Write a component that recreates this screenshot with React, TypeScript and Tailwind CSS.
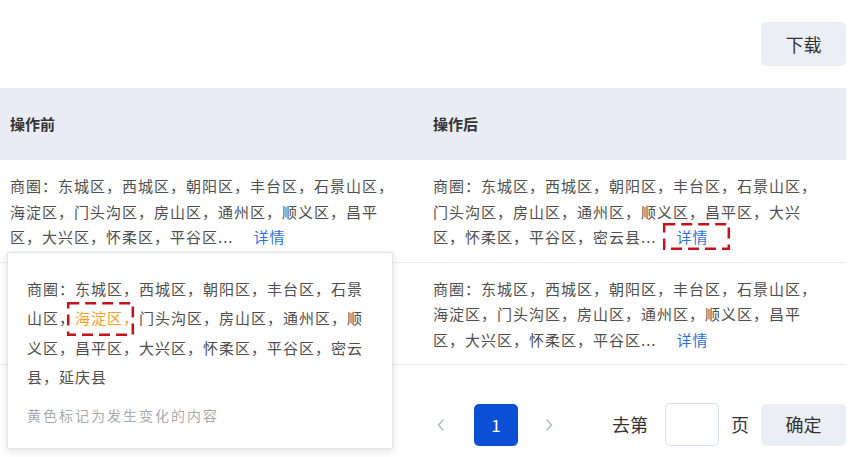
import React from 'react'

const FONT = { fontFamily: '"Noto Sans CJK SC", "Noto Sans", sans-serif' }

const ROWS = [
  {
    before: '商圈：东城区，西城区，朝阳区，丰台区，石景山区，海淀区，门头沟区，房山区，通州区，顺义区，昌平区，大兴区，怀柔区，平谷区...',
    after: '商圈：东城区，西城区，朝阳区，丰台区，石景山区，门头沟区，房山区，通州区，顺义区，昌平区，大兴区，怀柔区，平谷区，密云县...',
    markAfter: true,
  },
  {
    before: '商圈：东城区，西城区，朝阳区，丰台区，石景山区，海淀区，门头沟区，房山区，通州区，顺义区，昌平区，大兴区，怀柔区，平谷区...',
    after: '商圈：东城区，西城区，朝阳区，丰台区，石景山区，海淀区，门头沟区，房山区，通州区，顺义区，昌平区，大兴区，怀柔区，平谷区...',
    markAfter: false,
  },
]

// red dashed annotation frame drawn over the text
function Frame({ className }: { className: string }) {
  return (
    <svg className={'pointer-events-none absolute overflow-visible ' + className}>
      <rect x="1.2" y="1.2" width="calc(100% - 2.4px)" height="calc(100% - 2.4px)" fill="none" stroke="#c5131d" strokeWidth="2.5" strokeDasharray="11 6" />
    </svg>
  )
}

function Cell({ text, mark }: { text: string; mark?: boolean }) {
  return (
    <div className="w-[423px] pl-[10px] pr-[20px] pt-[13px] pb-[12px]">
      <p className="text-[15px] leading-[25.5px] tracking-[1px] text-[#4f4f4f]">
        {text}
        <span className="relative ml-[20px] text-[#2f6fe0]">
          详情
          {mark && <Frame className="-left-[14px] -top-[3px] h-[27px] w-[67px]" />}
        </span>
      </p>
    </div>
  )
}

function Chevron({ dir }: { dir: 'left' | 'right' }) {
  return (
    <svg width="10" height="16" viewBox="0 0 10 16" fill="none">
      <polyline
        points={dir === 'left' ? '7,3 2.5,8 7,13' : '3,3 7.5,8 3,13'}
        stroke="#b4bac6"
        strokeWidth="1.6"
        strokeLinecap="round"
        strokeLinejoin="round"
      />
    </svg>
  )
}

export default function App() {
  return (
    <div className="relative h-[457px] w-[856px] overflow-hidden bg-white" style={FONT}>
      <div className="flex justify-end pt-[22px] pr-[10px]">
        <button className="h-[44px] w-[85px] rounded-[5px] bg-[#eceef5] text-[18px] text-[#333]">下载</button>
      </div>

      <div className="mt-[22px] w-[846px]">
        <div className="flex h-[72px] items-center bg-[#e9ecf4] text-[15px] font-semibold text-[#333]">
          <div className="w-[423px] pl-[10px]">操作前</div>
          <div className="w-[423px] pl-[10px]">操作后</div>
        </div>
        {ROWS.map((r, i) => (
          <div key={i} className="flex border-b border-[#e8ebf2]">
            <Cell text={r.before} />
            <Cell text={r.after} mark={r.markAfter} />
          </div>
        ))}
      </div>

      <div className="mt-[38px] flex items-center justify-end pr-[10px] text-[18px] text-[#333]">
        <Chevron dir="left" />
        <div className="ml-[28px] flex h-[42px] w-[44px] items-center justify-center rounded-[5px] bg-[#0b4fd4] text-[17px] text-white">1</div>
        <div className="ml-[26px]"><Chevron dir="right" /></div>
        <span className="ml-[58px]">去第</span>
        <div className="ml-[17px] h-[43px] w-[54px] rounded-[5px] border border-[#d9dfeb] bg-white" />
        <span className="ml-[12px]">页</span>
        <button className="ml-[12px] h-[42px] w-[85px] rounded-[5px] bg-[#eceef5] text-[18px] text-[#333]">确定</button>
      </div>

      <div className="absolute left-[7px] top-[252px] w-[386px] rounded-[2px] border border-[#e4e4e4] bg-white pl-[19px] pr-[20px] pt-[21px] pb-[22px] shadow-[0_2px_8px_rgba(0,0,0,0.12)]">
        <p className="text-[15px] leading-[29.3px] tracking-[1px] text-[#4f4f4f]">
          商圈：东城区，西城区，朝阳区，丰台区，石景山区，
          <span className="relative text-[#f5a22a]">
            海淀区，
            <Frame className="-left-[8px] -top-[5px] h-[34px] w-[67px]" />
          </span>
          门头沟区，房山区，通州区，顺义区，昌平区，大兴区，怀柔区，平谷区，密云县，延庆县
        </p>
        <p className="mt-[14px] text-[14px] tracking-[2px] text-[#aaa]">黄色标记为发生变化的内容</p>
      </div>
    </div>
  )
}
